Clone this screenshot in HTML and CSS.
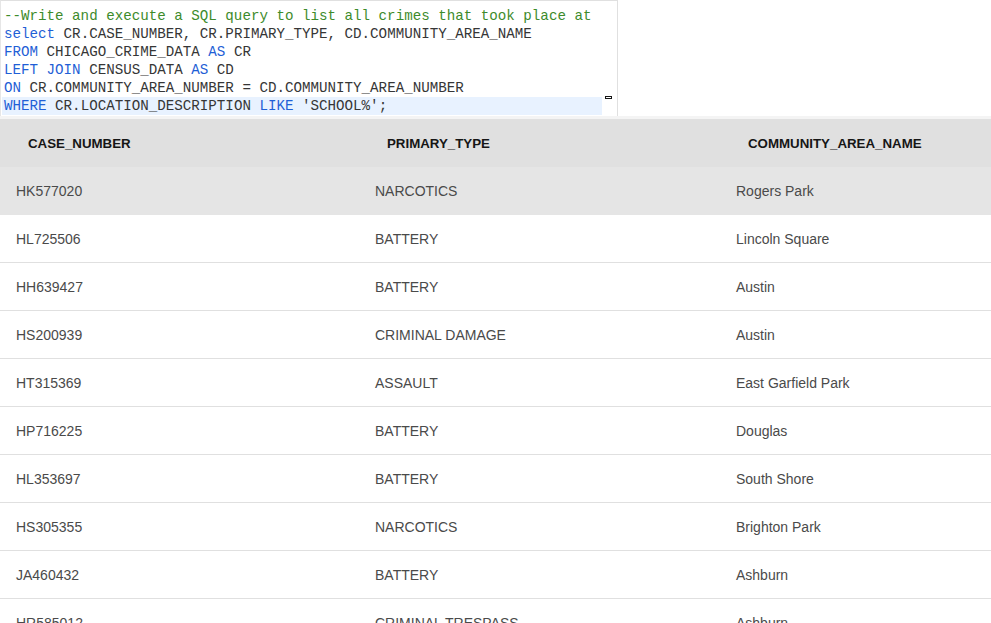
FILE: index.html
```html
<!DOCTYPE html>
<html>
<head>
<meta charset="utf-8">
<link rel="stylesheet" href="styles.css">
</head>
<body>
<div class="editor">
  <div class="code">
    <div class="line"><span class="cm">--Write and execute a SQL query to list all crimes that took place at</span></div>
    <div class="line"><span class="kw">select</span> CR.CASE_NUMBER, CR.PRIMARY_TYPE, CD.COMMUNITY_AREA_NAME</div>
    <div class="line"><span class="kw">FROM</span> CHICAGO_CRIME_DATA <span class="kw">AS</span> CR</div>
    <div class="line"><span class="kw">LEFT JOIN</span> CENSUS_DATA <span class="kw">AS</span> CD</div>
    <div class="line"><span class="kw">ON</span> CR.COMMUNITY_AREA_NUMBER = CD.COMMUNITY_AREA_NUMBER</div>
    <div class="line active"><span class="kw">WHERE</span> CR.LOCATION_DESCRIPTION <span class="kw">LIKE</span> 'SCHOOL%';</div>
  </div>
  <div class="marker"></div>
</div>
<div class="table">
  <div class="row head">
    <div class="cell">CASE_NUMBER</div>
    <div class="cell">PRIMARY_TYPE</div>
    <div class="cell">COMMUNITY_AREA_NAME</div>
  </div>
  <div class="row hover">
    <div class="cell">HK577020</div><div class="cell">NARCOTICS</div><div class="cell">Rogers Park</div>
  </div>
  <div class="row">
    <div class="cell">HL725506</div><div class="cell">BATTERY</div><div class="cell">Lincoln Square</div>
  </div>
  <div class="row">
    <div class="cell">HH639427</div><div class="cell">BATTERY</div><div class="cell">Austin</div>
  </div>
  <div class="row">
    <div class="cell">HS200939</div><div class="cell">CRIMINAL DAMAGE</div><div class="cell">Austin</div>
  </div>
  <div class="row">
    <div class="cell">HT315369</div><div class="cell">ASSAULT</div><div class="cell">East Garfield Park</div>
  </div>
  <div class="row">
    <div class="cell">HP716225</div><div class="cell">BATTERY</div><div class="cell">Douglas</div>
  </div>
  <div class="row">
    <div class="cell">HL353697</div><div class="cell">BATTERY</div><div class="cell">South Shore</div>
  </div>
  <div class="row">
    <div class="cell">HS305355</div><div class="cell">NARCOTICS</div><div class="cell">Brighton Park</div>
  </div>
  <div class="row">
    <div class="cell">JA460432</div><div class="cell">BATTERY</div><div class="cell">Ashburn</div>
  </div>
  <div class="row">
    <div class="cell">HR585012</div><div class="cell">CRIMINAL TRESPASS</div><div class="cell">Ashburn</div>
  </div>
</div>
</body>
</html>
```

FILE: styles.css
```css
html, body {
  margin: 0;
  padding: 0;
  background: #ffffff;
  overflow: hidden;
}
body {
  width: 991px;
  font-family: "Liberation Sans", Arial, sans-serif;
}
.editor {
  position: relative;
  width: 618px;
  height: 116px;
  border-top: 1px solid #e0e0e0;
  border-left: 1px solid #e6e6e6;
  border-right: 1px solid #e0e0e0;
  box-sizing: border-box;
  padding-top: 6px;
}
.code {
  font-family: "Liberation Mono", "DejaVu Sans Mono", monospace;
  font-size: 14.2px;
  line-height: 18px;
  color: #363636;
}
.line {
  white-space: pre;
  height: 18px;
  padding-left: 2px;
  width: 598px;
  margin-left: 1px;
}
.line.active {
  background: #e8f2ff;
}
.cm { color: #3d8b2b; }
.kw { color: #1f5fd6; }
.marker {
  position: absolute;
  left: 604px;
  top: 95px;
  width: 5px;
  height: 1px;
  border: 1px solid #161616;
}
.table {
  border-top: 3px solid #f4f4f4;
}
.row {
  display: grid;
  grid-template-columns: 359px 361px 1fr;
  height: 48px;
  box-sizing: border-box;
  border-bottom: 1px solid #e0e0e0;
  align-items: center;
  font-size: 14px;
  color: #4a4a4a;
}
.row .cell {
  padding-left: 16px;
}
.row.head {
  background: #e0e0e0;
  border-bottom: none;
  color: #161616;
  font-weight: bold;
  font-size: 13.3px;
}
.row.head .cell {
  padding-left: 28px;
}
.row.hover {
  background: #e5e5e5;
  border-bottom-color: #e5e5e5;
}
```
